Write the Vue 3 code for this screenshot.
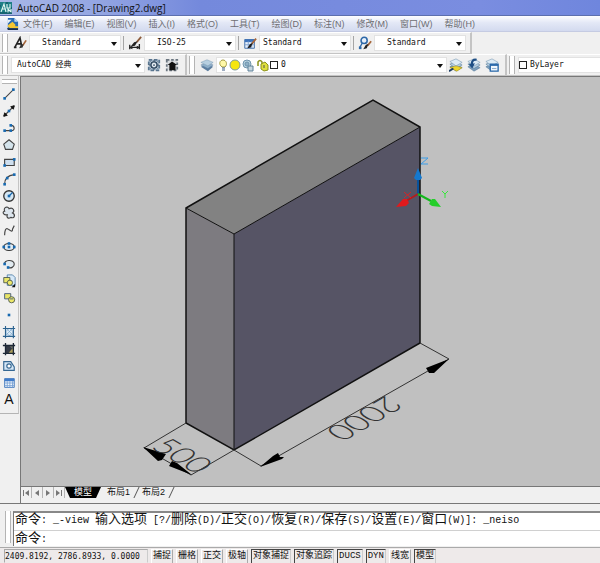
<template>
  <div class="cad">
    <header class="title-bar">
      <svg class="app-icon" viewBox="0 0 12 12" aria-hidden="true">
        <rect width="12" height="12" fill="#1f7f86" />
        <path d="M1 10L4 2l2 8M2 7h3M7 2v4h3V2M8 11V7l3 3V7" fill="none" stroke="#e3f7f2" stroke-width="1.1" />
        <path d="M0 4h1M6 1h2M11 6h1M0 11h12" stroke="#0c4a5a" />
      </svg>
      <h1>AutoCAD 2008 - [Drawing2.dwg]</h1>
    </header>

    <nav class="menu-bar">
      <svg class="doc-icon" viewBox="0 0 14 14" aria-hidden="true">
        <path d="M2 1h7l4 4v8H2z" fill="#2a6cb5" />
        <path d="M9 1l4 4H9z" fill="#bcd9f2" />
        <path d="M2 9l5-4 3 3v3H2z" fill="#f4c632" />
        <path d="M3 10h10v2H4z" fill="#f4c632" />
        <path d="M1 12h12v2H2z" fill="#182c4a" />
        <path d="M2 3h4l-4 4z" fill="#e8f2fa" />
      </svg>
      <button v-for="item in menus" :key="item" type="button">{{ item }}</button>
    </nav>

    <div class="toolbar">
      <div class="band">
        <span class="grip"></span>
        <template v-for="(style, i) in styles" :key="style.label">
          <span v-if="i" class="divider"></span>
          <button type="button" class="tool" :aria-label="style.label">
            <svg viewBox="0 0 16 16" v-html="style.icon"></svg>
          </button>
          <span class="combo">
            <select :class="{ indent: style.indent }" :aria-label="style.label">
              <option>{{ style.value }}</option>
            </select>
          </span>
        </template>
      </div>
    </div>

    <div class="toolbar">
      <div class="band">
        <span class="grip"></span>
        <span class="combo workspace">
          <select aria-label="工作空间">
            <option>AutoCAD 经典</option>
          </select>
        </span>
        <button v-for="b in workspaceTools" :key="b.label" type="button" class="tool" :aria-label="b.label">
          <svg viewBox="0 0 16 16" v-html="b.icon"></svg>
        </button>
      </div>
      <div class="band">
        <span class="grip"></span>
        <button type="button" class="tool" aria-label="图层特性管理器">
          <svg viewBox="0 0 16 16" v-html="layersIcon"></svg>
        </button>
        <span class="combo layer">
          <svg class="layer-state" viewBox="0 0 54 14" aria-hidden="true">
            <path d="M5 9C1 6 3 2 6 2s5 4 2 7z" fill="#fff8a8" stroke="#a39a42" />
            <path d="M5 10h3M5 12h3" stroke="#3f5c86" />
            <circle cx="18" cy="7" r="5" fill="#f5e610" stroke="#7d9b9b" />
            <circle cx="30" cy="6" r="4" fill="#b9d3e0" stroke="#7195ae" />
            <path d="M31 8h5v5h-5z" fill="#c6d6e0" stroke="#5c8098" />
            <circle cx="30" cy="6" r="2" fill="#8fb0c6" stroke="#6f95ae" />
            <path d="M41 8V4q2-3 4 0v4" fill="none" stroke="#8c921b" stroke-width="1.5" />
            <path d="M44 6l4-2 3 3v5l-4 1-3-2z" fill="#dfe03c" stroke="#8c921b" />
            <path d="M47 7v3" stroke="#555" />
          </svg>
          <span class="swatch"></span>
          <select aria-label="图层">
            <option>0</option>
          </select>
        </span>
        <button v-for="b in layerTools" :key="b.label" type="button" class="tool" :aria-label="b.label">
          <svg viewBox="0 0 16 16" v-html="b.icon"></svg>
        </button>
      </div>
      <div class="band last">
        <span class="grip"></span>
        <span class="combo color">
          <span class="swatch"></span>
          <select aria-label="颜色">
            <option>ByLayer</option>
          </select>
        </span>
      </div>
    </div>

    <main class="workspace-area">
      <div class="palette-column">
        <div class="palette">
          <span class="grip-h"></span>
          <button v-for="tool in drawTools" :key="tool.label" type="button" class="tool" :aria-label="tool.label">
            <svg viewBox="0 0 16 16" v-html="tool.icon"></svg>
          </button>
          <button type="button" class="tool letter">A</button>
        </div>
      </div>

      <section class="document">
        <div class="canvas">
          <svg viewBox="21 77 579 409" preserveAspectRatio="xMinYMin meet">
            <!-- solid -->
            <path d="M186 208L373 100l47 27-186 107z" fill="#828282" />
            <path d="M186 208l48 26v216l-48-27z" fill="#7d7b80" />
            <path d="M234 234l186-107v216L234 450z" fill="#565465" />
            <path d="M186 208l48 26 186-107" class="edge" />
            <path d="M234 234v216" class="edge" />
            <path d="M186 208L373 100l47 27v216L234 450l-48-27z" class="outline" />

            <!-- dimensions -->
            <path d="M186 423l-42 25M234 450l-43 25M234 450l27 16M420 343l29 16" class="dim" />
            <path d="M144 448l47 27M261 466l188-107" class="dim" />
            <path d="M143 447l23 7-4 6-4 1zM192 475l-23-9 3-5 5 2z" />
            <path d="M260 467l13-11 5-3 2 4 4 0-2 2zM449 359l-23 9 3 5 5 0z" />
            <text class="dim-text" transform="matrix(0.866 0.5 -0.866 0.5 173 461)">500</text>
            <text class="dim-text" transform="matrix(-0.866 0.5 -0.866 -0.5 355 413)">2000</text>

            <!-- UCS icon -->
            <path d="M418 194v-16" stroke="#07529c" stroke-width="2" />
            <path d="M418 168l4 10-2 2h-4l-2-2z" fill="#1478ce" />
            <path d="M418 194l-12 7" stroke="#b41b1e" stroke-width="2" />
            <path d="M396 207l7-8 4 0 2 4-3 3z" fill="#e01a1c" />
            <path d="M418 194l13 7" stroke="#13b71c" stroke-width="2" />
            <path d="M441 207l-6-8-3 0-3 5 3 2z" fill="#24ce2a" />
            <path d="M421 158h7l-7 6h7" fill="none" stroke="#3a9de8" />
            <path d="M404 192l7 6M411 192l-7 6" stroke="#d62426" />
            <path d="M442 191l3 3 3-3M445 194v4" fill="none" stroke="#35e83a" />
          </svg>
        </div>
        <div class="tabs">
          <button v-for="a in arrows" :key="a.label" type="button" class="nav" :aria-label="a.label">
            <svg viewBox="0 0 8 8"><path :d="a.d" /></svg>
          </button>
          <button
              v-for="tab in tabs"
              :key="tab"
              type="button"
              class="tab"
              :class="{ active: tab === currentTab }"
              @click="currentTab = tab"
          >
            {{ tab }}
          </button>
        </div>
      </section>
    </main>

    <section class="command">
      <span class="grip"></span>
      <div class="command-box">
        <p class="history">
          <span v-for="(part, i) in history" :key="i" :class="{ latin: i % 2 }">{{ part }}</span>
        </p>
        <div class="prompt">
          <label for="command-input">命令<span class="latin">:</span></label>
          <input id="command-input" v-model="command" type="text" />
        </div>
      </div>
    </section>

    <footer class="status">
      <output>2409.8192, 2786.8933, 0.0000</output>
      <button
          v-for="mode in modes"
          :key="mode.label"
          type="button"
          :class="{ on: mode.on }"
          @click="mode.on = !mode.on"
      >
        {{ mode.label }}
      </button>
    </footer>
  </div>
</template>

<script setup>
import { ref, reactive } from "vue";

const menus = [
  "文件(F)", "编辑(E)", "视图(V)", "插入(I)", "格式(O)", "工具(T)",
  "绘图(D)", "标注(N)", "修改(M)", "窗口(W)", "帮助(H)",
];

const brush = '<path d="M15 3l-5 6" stroke="#a5653a" stroke-width="2"/><path d="M11 8l-2 5-4 1 3-5z" fill="#1c1c1c"/>';

const styles = [
  {
    label: "文字样式",
    value: "Standard",
    indent: true,
    icon: '<path d="M2 13L8 2l2 10M4 9h6M1 13h3" fill="none" stroke="#222" stroke-width="1.800"/><path d="M15 5l-4 6" stroke="#a5653a" stroke-width="2"/><path d="M12 9l-1 4-4 1 2-4z" fill="#333"/>',
  },
  {
    label: "标注样式",
    value: "ISO-25",
    indent: true,
    icon: '<path d="M2 10v5M13 9v6M2 13h11" stroke="#222" stroke-width="1.500"/><path d="M1 13l4-2v4zM14 13l-4-2v4z" fill="#222"/><path d="M15 1L10 7" stroke="#8c5a3a" stroke-width="2"/><path d="M11 6l-3 5-5 1 4-5z" fill="#222"/>',
  },
  {
    label: "表格样式",
    value: "Standard",
    icon: '<path d="M2 4h11v10H2z" fill="#e7f0fb" stroke="#3565a3"/><path d="M2 4h11v3H2z" fill="#3d74bd"/><path d="M2 10h11M6 6v8M10 6v8" stroke="#7b9fcd"/>' + brush,
  },
  {
    label: "多重引线样式",
    value: "Standard",
    indent: true,
    icon: '<circle cx="7" cy="5" r="3.500" fill="#e7f0fb" stroke="#2e68a8" stroke-width="1.800"/><path d="M5 8l-3 5" stroke="#2e68a8" stroke-width="1.500"/><path d="M1 12h3v3H1z" fill="#2e68a8"/><path d="M15 6l-4 5" stroke="#a5653a" stroke-width="2"/><path d="M12 9l-2 5-4 1 3-5z" fill="#222"/>',
  },
];

const workspaceTools = [
  {
    label: "工作空间设置",
    icon: '<path d="M2 2h12v12H2z" fill="#b4c6d6" stroke="#5a7690" stroke-width="2" stroke-dasharray="4 2"/><circle cx="8" cy="8" r="3.500" fill="#e6edf3" stroke="#334b62" stroke-width="1.500"/><path d="M8 2v3M8 11v3M2 8h3M11 8h3M4 4l2 2M10 10l2 2M12 4l-2 2M4 12l2-2" stroke="#334b62"/><circle cx="8" cy="8" r="1" fill="#334b62"/>',
  },
  {
    label: "我的工作空间",
    icon: '<path d="M2 2h12v12H2z" fill="#d9dcdf" stroke="#6b7680" stroke-width="2" stroke-dasharray="3 2"/><path d="M3 8l5-4 6 4h-2v6H5V8z" fill="#111"/>',
  },
];

const sheets = '<path d="M1 10l7-3 7 4-7 4z" fill="#7d9fbd" stroke="#537694" stroke-width=".6"/><path d="M1 7l7-3 7 4-7 4z" fill="#b4cde0" stroke="#537694" stroke-width=".6"/><path d="M1 4l7-3 7 4-7 4z" fill="#dcebf5" stroke="#6d90ad" stroke-width=".6"/>';
const layersIcon = '<path d="M1 10l7-3 7 3-6 5z" fill="#5b7d9f"/><path d="M1 8l7-3 7 3-6 4z" fill="#8fb0ca" stroke="#5b7d9f" stroke-width=".5"/><path d="M1 5l7-3 7 3-6 4z" fill="#b7cfe0" stroke="#6f91ad" stroke-width=".5"/>';

const layerTools = [
  {
    label: "将对象的图层置为当前",
    icon: sheets + '<path d="M1 11l7-2 7 2-6 4z" fill="#ecd52c" stroke="#a68e14" stroke-width=".6"/><path d="M0 15l5-3" stroke="#1d3e66" stroke-width="2"/>',
  },
  {
    label: "上一个图层",
    icon: sheets + '<path d="M11 2C6 1 5 5 6 9" fill="none" stroke="#1f4f85" stroke-width="2.500"/><path d="M2 7l7-1-3 6z" fill="#1f4f85"/>',
  },
  {
    label: "图层状态管理器",
    icon: sheets + '<path d="M6 7h9v8H6z" fill="#eff6fc" stroke="#2666a8" stroke-width="1.500"/><path d="M6 8h9" stroke="#2666a8" stroke-width="2"/><path d="M8 12h5" stroke="#7fa4c7"/>',
  },
];

// 绘图工具栏
const dot = (x, y) => `<rect x="${x - 1.5}" y="${y - 1.5}" width="3" height="3" fill="#1769b0"/>`;
const stroke = (d, fill = "none") => `<path d="${d}" fill="${fill}" stroke="#444" stroke-width="1.300"/>`;

const drawTools = [
  { label: "直线", icon: stroke("M3 13L13 3") + dot(3, 13) + dot(13, 3) },
  {
    label: "构造线",
    icon: stroke("M2 14L14 2") + '<path d="M2 14l1-4 3 3zM14 2l-1 4-3-3z" fill="#111" stroke="#111"/>' + dot(8, 8),
  },
  { label: "多段线", icon: stroke("M3 11h8c4 0 4-6-1-6") + dot(3, 11) + dot(10, 11) + dot(10, 5) },
  { label: "正多边形", icon: stroke("M8 2l6 5-2 6H4L2 7z", "#d5e4ec") },
  { label: "矩形", icon: stroke("M3 5h11v7H3z", "#cfdfee") + dot(3, 12) + dot(14, 5) },
  { label: "圆弧", icon: stroke("M3 14Q3 4 14 3") + dot(3, 14) + dot(6, 7) + dot(14, 3) },
  {
    label: "圆",
    icon: '<circle cx="8" cy="8" r="6" fill="#d5e7f4" stroke="#333" stroke-width="1.500"/><path d="M8 8l4-4" stroke="#1769b0" stroke-width="1.500"/>' + dot(8, 8),
  },
  { label: "修订云线", icon: stroke("M6 10C1 11 0 6 3 6 1 1 7 0 8 3c5-2 7 3 4 5 4 2 2 7-2 5-3 2-5 0-4-3z", "#dce5ed") },
  { label: "样条曲线", icon: stroke("M3 14c0-5 1-9 4-7s5 4 5 0l2-4") },
  {
    label: "椭圆",
    icon: '<ellipse cx="8" cy="8" rx="6" ry="4" fill="#e2edf5" stroke="#333" stroke-width="1.300"/>' + dot(8, 4) + dot(2, 8) + dot(14, 8) + dot(8, 8),
  },
  { label: "椭圆弧", icon: stroke("M3 9C1 3 14 2 14 8c0 4-4 5-7 4", "#e2ebf1") + dot(3, 8) + dot(7, 12) },
  {
    label: "插入块",
    icon: '<path d="M6 1h6l3 3v9H6z" fill="#d7e9f8" stroke="#507fa8"/><path d="M2 4h7v6H2z" fill="#e9e567" stroke="#49574f"/><circle cx="9" cy="10" r="3" fill="#ede969" stroke="#49574f"/><path d="M15 11v4h-4z" fill="#111"/>',
  },
  {
    label: "创建块",
    icon: '<path d="M3 3h7v6H3z" fill="#e9e567" stroke="#41577a"/><circle cx="11" cy="10" r="3.500" fill="#ede969" stroke="#49574f"/><path d="M9 9h4" stroke="#41577a"/>',
  },
  { label: "点", icon: dot(8, 8) },
  {
    label: "图案填充",
    icon: '<path d="M4 4h9v9H4z" fill="#dcebf6"/><path d="M4 8l4-4M4 12l8-8M8 13l5-5M4 8l5 5M5 4l8 8M9 4l4 4" stroke="#7ba6cc" stroke-width=".8"/><path d="M1 4h14M1 13h14M4 1v14M13 1v14" stroke="#2b628f" stroke-width="1.300"/>',
  },
  {
    label: "渐变色",
    icon: '<path d="M4 4h9v9H4z" fill="#343a46"/><path d="M13 6v7H7z" fill="#a99d5b"/><path d="M8 4h5v5z" fill="#6c7069"/><path d="M1 4h14M1 13h14M4 1v14M13 1v14" stroke="#1d2836" stroke-width="1.500"/>',
  },
  {
    label: "面域",
    icon: '<path d="M2 3h8l4 6v4H2z" fill="#d5e7f7" stroke="#356792" stroke-width="1.300"/><circle cx="8" cy="8" r="2.500" fill="#fff" stroke="#356792" stroke-width="1.300"/>',
  },
  {
    label: "表格",
    icon: '<path d="M3 3h11v10H3z" fill="#f3f8fd" stroke="#3871b8"/><path d="M3 3h11v3H3z" fill="#3f7bc9"/><path d="M3 8h11M3 11h11M6 6v7M9 6v7M12 6v7" stroke="#79a2d6"/>',
  },
];

const arrows = [
  { label: "第一个", d: "M1 1h1v6H1zM7 1v6L3 4z" },
  { label: "上一个", d: "M6 1v6L2 4z" },
  { label: "下一个", d: "M2 1v6l4-3z" },
  { label: "最后一个", d: "M6 1h1v6H6zM1 1v6l4-3z" },
];

const tabs = ["模型", "布局1", "布局2"];
const currentTab = ref("模型");

const command = ref("");
// 中文与西文分段，奇数段为西文
const history = "命令: _-view 输入选项 [?/删除(D)/正交(O)/恢复(R)/保存(S)/设置(E)/窗口(W)]: _neiso"
  .split(/([\x20-\x7e]+)/);

const modes = reactive([
  { label: "捕捉", on: false },
  { label: "栅格", on: false },
  { label: "正交", on: false },
  { label: "极轴", on: false },
  { label: "对象捕捉", on: true },
  { label: "对象追踪", on: true },
  { label: "DUCS", on: true },
  { label: "DYN", on: true },
  { label: "线宽", on: false },
  { label: "模型", on: true },
]);
</script>

<style>
body {
  margin: 0;
}
</style>

<style scoped>
.cad {
  display: flex;
  flex-direction: column;
  height: 100vh;
  overflow: hidden;
  background: #f0f0f0;
  color: #111;
  font-family: "Liberation Sans", "Noto Sans CJK SC", sans-serif;
  font-size: 9px;
}

button,
select,
input {
  margin: 0;
  padding: 0;
  border: 0;
  background: none;
  color: inherit;
  font: inherit;
}

svg {
  display: block;
}

.title-bar {
  display: flex;
  align-items: center;
  gap: 5px;
  height: 15px;
  border-bottom: 1px solid #5c6fae;
  background: linear-gradient(90deg, #a9b8e6 0, #93a5e2 100px, #7489dc 200px, #7a8de0 80%, #6f86dd);
}

.title-bar h1 {
  margin: 0;
  font: 10px/14px "Open Sans", sans-serif;
}

.app-icon {
  width: 12px;
  height: 12px;
}

.menu-bar {
  display: flex;
  align-items: center;
  gap: 12px;
  height: 15px;
  padding-left: 6px;
  border-bottom: 1px solid #c5cbe2;
  background: linear-gradient(#fdfdff, #e3e8f6 45%, #d3daef);
  color: #6e6e72;
  line-height: 14px;
  white-space: nowrap;
}

.doc-icon {
  width: 13px;
  height: 13px;
  margin-right: -8px;
}

.toolbar {
  display: flex;
  flex: none;
  height: 22px;
}

.band {
  display: flex;
  align-items: center;
  box-sizing: border-box;
  padding: 0 4px 0 2px;
  border-top: 1px solid #fff;
  border-right: 2px solid #c4c4c4;
  border-bottom: 1px solid #c4c4c4;
}

.band.last {
  flex: 1;
  padding-right: 0;
  border-right: 0;
}

.grip {
  flex: none;
  box-sizing: border-box;
  width: 6px;
  height: 18px;
  margin-right: 3px;
  border: 1px solid #b4b4b4;
  border-width: 0 1px;
  background: #fff;
}

.divider {
  width: 1px;
  height: 14px;
  margin: 0 2px;
  background: #a5a5a5;
}

.tool {
  flex: none;
  width: 18px;
  height: 17px;
}

.tool svg {
  width: 14px;
  height: 14px;
  margin: 0 auto;
}

.combo {
  position: relative;
  display: flex;
  align-items: center;
  box-sizing: border-box;
  width: 92px;
  height: 16px;
  border: 1px solid #e2e2e2;
  background: #fff;
  font: 8px/14px "DejaVu Sans Mono", "Noto Sans CJK SC", monospace;
}

.combo::after {
  position: absolute;
  right: 3px;
  top: 6px;
  border: 3px solid transparent;
  border-top: 4px solid #111;
  border-bottom: 0;
  content: "";
  pointer-events: none;
}

.combo select {
  flex: 1;
  min-width: 0;
  height: 14px;
  padding-left: 3px;
  appearance: none;
}

.combo .indent {
  padding-left: 12px;
}

.workspace {
  width: 134px;
}

.workspace select {
  padding-left: 5px;
}

.layer {
  width: 231px;
}

.layer-state {
  width: 54px;
  height: 14px;
  margin-right: -1px;
}

.color {
  flex: 1;
}

.swatch {
  box-sizing: border-box;
  width: 8px;
  height: 8px;
  border: 1px solid #222;
}

.workspace-area {
  display: flex;
  flex: 1;
  min-height: 0;
}

.palette-column {
  flex: none;
  width: 20px;
}

.palette {
  display: flex;
  flex-direction: column;
  width: 18px;
  padding-bottom: 5px;
  border-right: 1px solid #c4c4c4;
  border-bottom: 1px solid #b4b4b4;
}

.grip-h {
  height: 3px;
  margin: 3px 1px 1px 2px;
  border: 1px solid #b4b4b4;
  border-width: 1px 0;
  background: #fff;
}

.letter {
  font-size: 14px;
  line-height: 17px;
}

.document {
  display: flex;
  flex: 1;
  flex-direction: column;
  min-width: 0;
  border-top: 1px solid #777;
  border-left: 1px solid #777;
}

.canvas {
  flex: 1;
  min-height: 0;
  border-bottom: 1px solid #777;
  background: #c0c0c0;
}

.canvas svg {
  width: 100%;
  height: 100%;
}

.edge,
.outline,
.dim {
  fill: none;
  stroke: #111;
  stroke-width: 1;
}

.outline {
  stroke-width: 1.5;
}

.dim {
  stroke: #333;
}

.dim-text {
  fill: #333;
  font-family: Lato, sans-serif;
  font-size: 31px;
  font-weight: 300;
  text-anchor: middle;
}

.tabs {
  display: flex;
  height: 11px;
  margin-bottom: 5px;
}

.nav {
  box-sizing: border-box;
  width: 11px;
  height: 11px;
  border-right: 1px solid #b4b4b4;
}

.nav svg {
  width: 8px;
  height: 8px;
  margin: 0 auto;
  fill: #777;
}

.tab {
  position: relative;
  padding: 0 6px;
  line-height: 11px;
}

.tab::after {
  position: absolute;
  top: 0;
  right: -1px;
  width: 1px;
  height: 11px;
  background: #555;
  transform: skewX(-25deg);
  content: "";
}

.tab.active {
  padding: 0 9px;
  background: #000;
  color: #fff;
  clip-path: polygon(0 0, 100% 0, calc(100% - 5px) 100%, 5px 100%);
}

.command {
  display: flex;
  flex: none;
  box-sizing: border-box;
  height: 45px;
  padding: 7px 0 1px 5px;
  border-top: 1px solid #777;
  border-bottom: 1px solid #aaa;
}

.command .grip {
  height: 32px;
  margin-right: 2px;
}

.command-box {
  flex: 1;
  min-width: 0;
  border-top: 2px solid #888;
  border-left: 1px solid #777;
  background: #fff;
  font: 13px/14px "Noto Sans CJK SC", sans-serif;
}

.history {
  height: 17px;
  margin: 0;
  padding-left: 1px;
  border-bottom: 1px solid #d0d0d0;
  line-height: 10px;
  white-space: pre;
}

.latin {
  font-family: "Liberation Mono", monospace;
  font-size: 10px;
}

.prompt {
  display: flex;
  padding-left: 1px;
  line-height: 12px;
}

.prompt input {
  flex: 1;
  height: 14px;
  outline: none;
}

.status {
  display: flex;
  flex: none;
  gap: 3px;
  height: 14px;
  padding: 1px 0 0 4px;
  background: #eeeaea;
}

.status output {
  box-sizing: border-box;
  width: 144px;
  border: 1px solid #aaa;
  border-color: #aaa #ccc transparent #aaa;
  font: 8px/13px "DejaVu Sans Mono", monospace;
}

.status button {
  box-sizing: border-box;
  height: 15px;
  padding: 0 1px;
  border: 1px solid #fff;
  border-right-color: #aaa;
  font-family: "Liberation Mono", "Noto Sans CJK SC", monospace;
  line-height: 13px;
  white-space: nowrap;
}

.status .on {
  border-color: #444 #ccc #ccc #444;
}
</style>
